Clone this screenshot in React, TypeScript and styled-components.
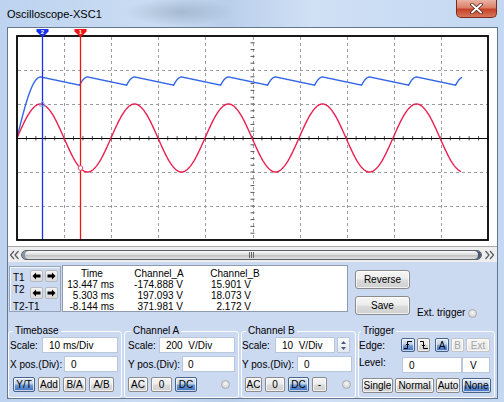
import React from "react";
import styled, { createGlobalStyle, css } from "styled-components";

const GlobalStyle = createGlobalStyle`
  html, body { margin: 0; padding: 0; }
  body {
    width: 504px; height: 402px; overflow: hidden;
    font-family: "Liberation Sans", Arial, sans-serif;
    font-size: 10px; color: #000;
  }
  * { box-sizing: border-box; }
`;

/* ---------- waveform data ---------- */
const X0 = 17;
const PERIOD = 94;
const redPts: string[] = [];
for (let x = X0; x <= 461; x += 1) {
  const y = 138 - 34 * Math.sin((2 * Math.PI * (x - X0)) / PERIOD);
  redPts.push(`${x},${y.toFixed(2)}`);
}
const bluePts: string[] = [];
{
  let v = 0;
  for (let x = X0; x <= 462; x += 0.5) {
    const s = 61 * Math.abs(Math.sin((2 * Math.PI * (x - X0)) / PERIOD));
    v = Math.max(v - 0.105, s);
    bluePts.push(`${x},${(138 - v).toFixed(2)}`);
  }
}
const vGrid = Array.from({ length: 9 }, (_, i) => Math.round(X0 + 47.1 * (i + 1)) + 0.5);
const hGrid = [70.5, 104.5, 172.5, 206.5];
const hTicks = Array.from({ length: 50 }, (_, i) => X0 + 9.42 * (i + 1));
const vTicks = Array.from({ length: 29 }, (_, i) => 36 + 6.8 * (i + 1));

/* ---------- frame ---------- */
const Window = styled.div`
  width: 504px;
  height: 402px;
  display: flex;
  flex-direction: column;
  padding-bottom: 3px;
  background:
    radial-gradient(ellipse 55px 14px at 180px 12px, rgba(110, 130, 150, 0.35), transparent),
    linear-gradient(90deg, #bdd3ef 0%, #cadcf3 30%, #b9cfea 45%, #d0e0f5 62%, #c3d8f1 100%);
`;

const TitleBar = styled.div`
  height: 27px;
  display: flex;
  align-items: flex-start;
  flex-shrink: 0;
`;

const Title = styled.div`
  padding: 7px 0 0 7px;
  font-size: 11px;
  line-height: 14px;
  color: #000;
`;

const CloseButton = styled.div`
  margin-left: auto;
  margin-right: 7px;
  width: 41px;
  height: 18px;
  border: 1px solid #7a2b1e;
  border-top: none;
  border-radius: 0 0 5px 5px;
  background: linear-gradient(#eab2a4 0%, #dc8068 45%, #c5432a 55%, #d8765a 100%);
  display: flex;
  align-items: center;
  justify-content: center;
`;

const Client = styled.div`
  flex: 1;
  margin: 0 6px 0 7px;
  border: 1px solid #66768c;
  display: flex;
  flex-direction: column;
  background: #cbd9f1;
`;

const ScopeArea = styled.div`
  background: #fff;
  padding: 0 1px 0 2px;
  border-bottom: 1px solid #a8a8a8;
  svg { display: block; }
`;

const ScrollRow = styled.div`
  height: 15px;
  display: flex;
  align-items: center;
  background: #eeeeee;
  flex-shrink: 0;
`;

const ScrollArrow = styled.div<{ $w: number }>`
  width: ${(p) => p.$w}px;
  height: 15px;
  display: flex;
  align-items: center;
  justify-content: center;
`;

const Track = styled.div`
  flex: 1;
  height: 10px;
  border: 1px solid #5a5f68;
  border-radius: 5px;
  background: linear-gradient(#fafafa 0%, #dcdcdc 45%, #c2c2c2 55%, #e2e2e2 100%);
  display: flex;
  align-items: center;
  justify-content: center;
  box-shadow: inset -3px 0 0 #4c5a7a, inset 3px 0 0 #8a93a6;
`;

const Grip = styled.div`
  width: 5px;
  height: 6px;
  border-left: 1px solid #666;
  border-right: 1px solid #666;
  position: relative;
  &::after {
    content: "";
    position: absolute;
    left: 1px;
    top: 0;
    width: 1px;
    height: 6px;
    background: #666;
  }
`;

/* ---------- control panel ---------- */
const ControlPanel = styled.div`
  flex: 1;
  padding: 3px 0 0 0;
  display: flex;
  flex-direction: column;
`;

const TopRow = styled.div`
  display: flex;
  height: 50px;
  align-items: flex-start;
  flex-shrink: 0;
`;

const CursorBox = styled.div`
  margin: 1px 0 0 1px;
  width: 52px;
  height: 46px;
  border: 1px solid #95a2b8;
  box-shadow: inset 1px 1px 0 #f4f8ff;
  display: flex;
  padding: 3px 0 0 3px;
`;

const CursorLabels = styled.div`
  width: 17px;
  display: flex;
  flex-direction: column;
  line-height: 10px;
  padding-top: 3px;
  white-space: nowrap;
`;

const CursorLabel = styled.span<{ $gap?: number }>`
  margin-top: ${(p) => p.$gap ?? 0}px;
`;

const ArrowColumn = styled.div`
  display: flex;
  flex-direction: column;
  gap: 5px;
`;

const ArrowRow = styled.div`
  display: flex;
  gap: 2px;
`;

const ArrowButton = styled.div`
  width: 13px;
  height: 12px;
  border: 1px solid #b6b9bf;
  border-radius: 2px;
  background: linear-gradient(#f4f4f4, #d9d9d9);
  display: flex;
  align-items: center;
  justify-content: center;
`;

const Readout = styled.div`
  margin-left: 1px;
  width: 286px;
  height: 47px;
  background: #fff;
  border: 1px solid #8d9ab0;
  padding-top: 2px;
  display: grid;
  grid-template-columns: 58px 76px 76px;
  grid-auto-rows: 11px;
  line-height: 11px;
  font-size: 10px;
  align-content: start;
`;

const HeadCell = styled.div`
  text-align: center;
  white-space: nowrap;
`;

const ValueCell = styled.div<{ $pr: number }>`
  text-align: right;
  padding-right: ${(p) => p.$pr}px;
  white-space: nowrap;
`;

const SideButtons = styled.div`
  margin: 5px 0 0 7px;
  width: 55px;
  display: flex;
  flex-direction: column;
  gap: 7px;
`;

const buttonBase = css`
  border: 1px solid #8b8b8b;
  background: linear-gradient(#f6f6f6 0%, #ececec 48%, #dcdcdc 52%, #cfcfcf 100%);
  box-shadow: inset 0 0 0 1px rgba(255, 255, 255, 0.7);
  display: flex;
  align-items: center;
  justify-content: center;
  font-size: 10px;
  color: #000;
  white-space: nowrap;
`;

const PushButton = styled.div`
  ${buttonBase};
  height: 19px;
  border-radius: 3px;
`;

const ExtTrigger = styled.div`
  margin: 0 0 -4px 7px;
  align-self: flex-end;
  display: flex;
  align-items: center;
  gap: 3px;
  line-height: 12px;
  white-space: nowrap;
`;

const Radio = styled.div<{ $ml?: string; $mr?: number }>`
  width: 9px;
  height: 9px;
  border-radius: 50%;
  border: 1px solid #a9adb5;
  background: radial-gradient(circle at 50% 40%, #f7f7f7 0%, #d6d6d6 70%, #c2c2c2 100%);
  margin-left: ${(p) => p.$ml ?? "0"};
  margin-right: ${(p) => p.$mr ?? 0}px;
  flex-shrink: 0;
`;

const BottomRow = styled.div`
  margin-top: 10px;
  display: flex;
  gap: 2px;
`;

const Group = styled.fieldset<{ $w: number; $pl: number; $pr: number }>`
  width: ${(p) => p.$w}px;
  min-width: 0;
  margin: 0;
  padding: 0 ${(p) => p.$pr}px 4px ${(p) => p.$pl}px;
  border: 1px solid rgba(255, 255, 255, 0.95);
  border-radius: 3px;
`;

const Legend = styled.legend<{ $ml: number }>`
  font-size: 10px;
  line-height: 12px;
  padding: 0 2px;
  margin-left: ${(p) => p.$ml}px;
`;

const GroupBody = styled.div`
  display: flex;
  flex-direction: column;
  gap: 3px;
`;

const Row = styled.div<{ $top?: number }>`
  display: flex;
  align-items: center;
  height: 16px;
  margin-top: ${(p) => p.$top ?? 0}px;
`;

const Label = styled.span<{ $raise?: boolean }>`
  flex: 1;
  white-space: nowrap;
  ${(p) => p.$raise && css`align-self: flex-start; line-height: 12px;`}
`;

const Field = styled.div<{ $w: number; $pl: number; $mr?: number }>`
  width: ${(p) => p.$w}px;
  height: 16px;
  border: 1px solid #b9c6dc;
  background: #fff;
  padding-left: ${(p) => p.$pl}px;
  margin-right: ${(p) => p.$mr ?? 0}px;
  display: flex;
  align-items: center;
  white-space: pre;
  flex-shrink: 0;
`;

const Spinner = styled.div`
  width: 13px;
  height: 16px;
  margin: 0 2px 0 2px;
  border: 1px solid #b9c6dc;
  background: linear-gradient(#fbfbfb, #e4e8ef);
  display: flex;
  flex-direction: column;
  align-items: center;
  justify-content: space-around;
  padding: 1px 0;
`;

const ButtonRow = styled.div<{ $ml: number; $gap: number }>`
  display: flex;
  align-items: center;
  height: 15px;
  margin-top: 2px;
  padding-left: ${(p) => p.$ml}px;
  gap: ${(p) => p.$gap}px;
`;

const SmallButton = styled.div<{ $w: number; $on?: boolean; $off?: boolean; $h?: number; $ml?: number }>`
  ${buttonBase};
  width: ${(p) => p.$w}px;
  height: ${(p) => p.$h ?? 15}px;
  margin-left: ${(p) => p.$ml ?? 0}px;
  border-radius: 2px;
  flex-shrink: 0;
  ${(p) =>
    p.$on &&
    css`
      border-color: #4a6488;
      background: linear-gradient(#e2ebf7 0%, #c3d4ec 42%, #6c98d6 58%, #3f6fbf 100%);
    `}
  ${(p) =>
    p.$off &&
    css`
      color: #a6a6a6;
      border-color: #c4c4c4;
      background: linear-gradient(#f7f7f7, #e6e6e6);
    `}
`;

/* ---------- icons ---------- */
const ArrowIcon = ({ dir }: { dir: "l" | "r" }) => (
  <svg width="9" height="8" viewBox="0 0 9 8">
    {dir === "l" ? (
      <path d="M0.5 4 L4 0.5 L4 2.6 L8.5 2.6 L8.5 5.4 L4 5.4 L4 7.5 Z" fill="#000" />
    ) : (
      <path d="M8.5 4 L5 0.5 L5 2.6 L0.5 2.6 L0.5 5.4 L5 5.4 L5 7.5 Z" fill="#000" />
    )}
  </svg>
);

const Chevrons = ({ dir }: { dir: "l" | "r" }) => (
  <svg width="11" height="10" viewBox="0 0 11 10">
    <g fill="none" stroke="#5c6068" strokeWidth="1.3" strokeLinejoin="round">
      {dir === "l" ? (
        <>
          <path d="M5 1 L1.5 5 L5 9" />
          <path d="M9.5 1 L6 5 L9.5 9" />
        </>
      ) : (
        <>
          <path d="M1.5 1 L5 5 L1.5 9" />
          <path d="M6 1 L9.5 5 L6 9" />
        </>
      )}
    </g>
  </svg>
);

const EdgeIcon = ({ rising }: { rising: boolean }) => (
  <svg width="10" height="10" viewBox="0 0 10 10">
    <g fill="none" stroke="#000" strokeWidth="1">
      {rising ? (
        <>
          <path d="M1 8.5 H4.5 V1.5 H9" />
          <path d="M2.8 5.2 L4.5 3.5 L6.2 5.2" />
        </>
      ) : (
        <>
          <path d="M1 1.5 H4.5 V8.5 H9" />
          <path d="M2.8 4.8 L4.5 6.5 L6.2 4.8" />
        </>
      )}
    </g>
  </svg>
);

const SpinArrow = ({ up }: { up: boolean }) => (
  <svg width="5" height="3" viewBox="0 0 5 3">
    <path d={up ? "M0 3 L2.5 0 L5 3 Z" : "M0 0 L2.5 3 L5 0 Z"} fill="#4a5a78" />
  </svg>
);

const CloseGlyph = () => (
  <svg width="13" height="11" viewBox="0 0 13 11">
    <path d="M2 1.5 L11 9.5 M11 1.5 L2 9.5" stroke="#5a1e14" strokeWidth="3.6" strokeLinecap="round" />
    <path d="M2 1.5 L11 9.5 M11 1.5 L2 9.5" stroke="#fff" strokeWidth="2" strokeLinecap="round" />
  </svg>
);

const CursorFlag = ({ x, color, label }: { x: number; color: string; label: string }) => (
  <g>
    <path
      d={`M${x - 6} 29 H${x + 6} V31.5 L${x} 37.5 L${x - 6} 31.5 Z`}
      fill={color}
    />
    <text
      x={x}
      y={34.2}
      fontSize="6"
      fontWeight="bold"
      fill="#fff"
      textAnchor="middle"
      fontFamily="Liberation Sans, Arial, sans-serif"
    >
      {label}
    </text>
  </g>
);

const ScopePlot = () => (
  <svg width="486" height="218" viewBox="10 28 486 218">
    <rect x="17" y="36" width="471" height="204" fill="#fff" />
    <g stroke="#9c9c9c" strokeWidth="1" strokeDasharray="3 3">
      {vGrid.map((x) => (
        <line key={x} x1={x} y1={37} x2={x} y2={239} />
      ))}
      {hGrid.map((y) => (
        <line key={y} x1={18} y1={y} x2={487} y2={y} />
      ))}
    </g>
    <g stroke="#555" strokeWidth="1">
      {hTicks.map((x) => (
        <line key={x} x1={x} y1={136} x2={x} y2={140.5} />
      ))}
      {vTicks.map((y) => (
        <line key={y} x1={250.5} y1={y} x2={254.5} y2={y} />
      ))}
    </g>
    <line x1="17" y1="138.5" x2="488" y2="138.5" stroke="#000" strokeWidth="1.2" />
    <polyline points={bluePts.join(" ")} fill="none" stroke="#3467e6" strokeWidth="1.4" />
    <polyline points={redPts.join(" ")} fill="none" stroke="#ea1f4f" strokeWidth="1.4" />
    <line x1="42.5" y1="31" x2="42.5" y2="240" stroke="#1730f0" strokeWidth="1.3" />
    <line x1="80.5" y1="31" x2="80.5" y2="240" stroke="#f01515" strokeWidth="1.3" />
    <path d="M42.5 101 L45.5 106 L39.5 106 Z" fill="none" stroke="#7f9ed8" strokeWidth="1" />
    <circle cx="80.5" cy="168" r="2.3" fill="#fff" stroke="#e0507a" strokeWidth="1" />
    <rect x="17" y="36" width="471" height="204" fill="none" stroke="#000" strokeWidth="1.8" />
    <CursorFlag x={42.5} color="#1730f0" label="2" />
    <CursorFlag x={80.5} color="#f01515" label="1" />
  </svg>
);

/* ---------- data ---------- */
const readoutRows = [
  ["13.447 ms", "-174.888 V", "15.901 V"],
  ["5.303 ms", "197.093 V", "18.073 V"],
  ["-8.144 ms", "371.981 V", "2.172 V"],
];
const colPad = [7, 14, 22];

export default function App() {
  return (
    <>
      <GlobalStyle />
      <Window>
        <TitleBar>
          <Title>Oscilloscope-XSC1</Title>
          <CloseButton>
            <CloseGlyph />
          </CloseButton>
        </TitleBar>
        <Client>
          <ScopeArea>
            <ScopePlot />
          </ScopeArea>
          <ScrollRow>
            <ScrollArrow $w={13}>
              <Chevrons dir="l" />
            </ScrollArrow>
            <Track>
              <Grip />
            </Track>
            <ScrollArrow $w={15}>
              <Chevrons dir="r" />
            </ScrollArrow>
          </ScrollRow>
          <ControlPanel>
            <TopRow>
              <CursorBox>
                <CursorLabels>
                  <CursorLabel>T1</CursorLabel>
                  <CursorLabel $gap={2}>T2</CursorLabel>
                  <CursorLabel $gap={7}>T2-T1</CursorLabel>
                </CursorLabels>
                <ArrowColumn>
                  <ArrowRow>
                    <ArrowButton><ArrowIcon dir="l" /></ArrowButton>
                    <ArrowButton><ArrowIcon dir="r" /></ArrowButton>
                  </ArrowRow>
                  <ArrowRow>
                    <ArrowButton><ArrowIcon dir="l" /></ArrowButton>
                    <ArrowButton><ArrowIcon dir="r" /></ArrowButton>
                  </ArrowRow>
                </ArrowColumn>
              </CursorBox>
              <Readout>
                <HeadCell>Time</HeadCell>
                <HeadCell>Channel_A</HeadCell>
                <HeadCell>Channel_B</HeadCell>
                {readoutRows.map((row, r) =>
                  row.map((v, c) => (
                    <ValueCell key={`${r}-${c}`} $pr={colPad[c]}>
                      {v}
                    </ValueCell>
                  ))
                )}
              </Readout>
              <SideButtons>
                <PushButton>Reverse</PushButton>
                <PushButton>Save</PushButton>
              </SideButtons>
              <ExtTrigger>
                <span>Ext. trigger</span>
                <Radio />
              </ExtTrigger>
            </TopRow>
            <BottomRow>
              <Group $w={114} $pl={1} $pr={3}>
                <Legend $ml={3}>Timebase</Legend>
                <GroupBody>
                  <Row>
                    <Label>Scale:</Label>
                    <Field $w={76} $pl={6}>10 ms/Div</Field>
                  </Row>
                  <Row>
                    <Label>X pos.(Div):</Label>
                    <Field $w={54} $pl={6}>0</Field>
                  </Row>
                  <ButtonRow $ml={3} $gap={3}>
                    <SmallButton $w={22} $on>Y/T</SmallButton>
                    <SmallButton $w={22}>Add</SmallButton>
                    <SmallButton $w={23}>B/A</SmallButton>
                    <SmallButton $w={25}>A/B</SmallButton>
                  </ButtonRow>
                </GroupBody>
              </Group>
              <Group $w={115} $pl={3} $pr={3}>
                <Legend $ml={3}>Channel A</Legend>
                <GroupBody>
                  <Row>
                    <Label>Scale:</Label>
                    <Field $w={76} $pl={6}>{"200  V/Div"}</Field>
                  </Row>
                  <Row>
                    <Label>Y pos.(Div):</Label>
                    <Field $w={53} $pl={5}>0</Field>
                  </Row>
                  <ButtonRow $ml={0} $gap={3}>
                    <SmallButton $w={20}>AC</SmallButton>
                    <SmallButton $w={21}>0</SmallButton>
                    <SmallButton $w={22} $on>DC</SmallButton>
                    <Radio $ml="auto" $mr={5} />
                  </ButtonRow>
                </GroupBody>
              </Group>
              <Group $w={115} $pl={0} $pr={3}>
                <Legend $ml={4}>Channel B</Legend>
                <GroupBody>
                  <Row>
                    <Label>Scale:</Label>
                    <Field $w={60} $pl={6}>{"10  V/Div"}</Field>
                    <Spinner>
                      <SpinArrow up />
                      <SpinArrow up={false} />
                    </Spinner>
                  </Row>
                  <Row>
                    <Label>Y pos.(Div):</Label>
                    <Field $w={55} $pl={6}>0</Field>
                  </Row>
                  <ButtonRow $ml={3} $gap={3}>
                    <SmallButton $w={17}>AC</SmallButton>
                    <SmallButton $w={20}>0</SmallButton>
                    <SmallButton $w={21} $on>DC</SmallButton>
                    <SmallButton $w={15}>-</SmallButton>
                    <Radio $ml="auto" $mr={1} />
                  </ButtonRow>
                </GroupBody>
              </Group>
              <Group $w={137} $pl={0} $pr={4}>
                <Legend $ml={2}>Trigger</Legend>
                <GroupBody>
                  <Row>
                    <Label>Edge:</Label>
                    <SmallButton $w={14} $h={14} $on><EdgeIcon rising /></SmallButton>
                    <SmallButton $w={13} $h={14} $ml={2}><EdgeIcon rising={false} /></SmallButton>
                    <SmallButton $w={14} $h={14} $ml={5} $on>A</SmallButton>
                    <SmallButton $w={13} $h={14} $ml={2} $off>B</SmallButton>
                    <SmallButton $w={24} $h={14} $ml={2} $off>Ext</SmallButton>
                  </Row>
                  <Row $top={1}>
                    <Label $raise>Level:</Label>
                    <Field $w={60} $pl={6}>0</Field>
                    <Field $w={28} $pl={7} $mr={0}>V</Field>
                  </Row>
                  <ButtonRow $ml={3} $gap={2}>
                    <SmallButton $w={31}>Single</SmallButton>
                    <SmallButton $w={39}>Normal</SmallButton>
                    <SmallButton $w={24}>Auto</SmallButton>
                    <SmallButton $w={29} $on>None</SmallButton>
                  </ButtonRow>
                </GroupBody>
              </Group>
            </BottomRow>
          </ControlPanel>
        </Client>
      </Window>
    </>
  );
}
